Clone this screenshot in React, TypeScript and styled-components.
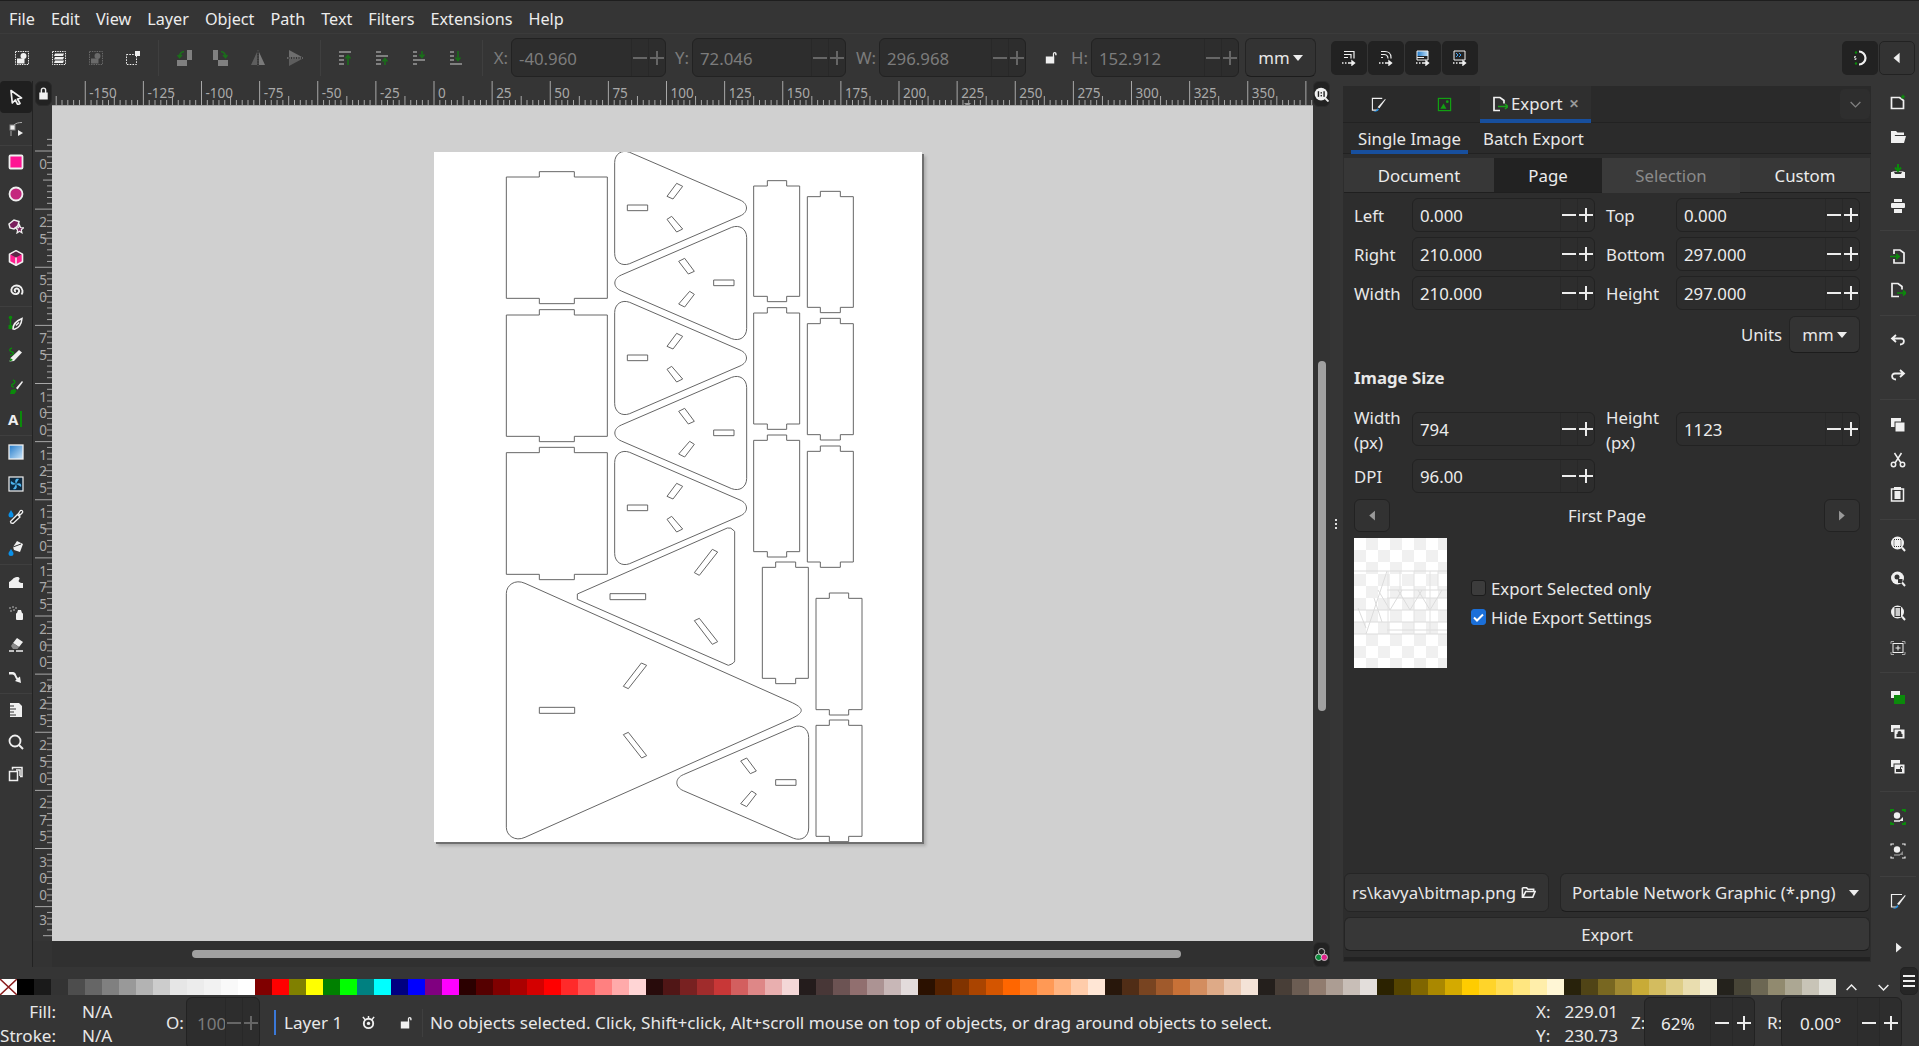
import React from 'react';
import styled, { createGlobalStyle } from 'styled-components';

const GlobalStyle = createGlobalStyle`
  html, body { margin: 0; padding: 0; background: #353535; }
  body { font-family: "Noto Sans", "Open Sans", sans-serif; font-size: 16.8px; color: #e8e8e8; }
  * { box-sizing: border-box; }
`;

// palette, same order as inkscape's default one
const SWATCHES = [
  '#000000', '#1a1a1a', '#333333', '#4d4d4d', '#666666', '#808080', '#999999', '#b3b3b3', '#cccccc', '#e6e6e6', '#ececec', '#f2f2f2', '#f9f9f9', '#ffffff',
  '#800000', '#ff0000', '#808000', '#ffff00', '#008000', '#00ff00', '#008080', '#00ffff', '#000080', '#0000ff', '#800080', '#ff00ff',
  '#2b0000', '#550000', '#800000', '#aa0000', '#d40000', '#ff0000', '#ff2a2a', '#ff5555', '#ff8080', '#ffaaaa', '#ffd5d5',
  '#280b0b', '#501616', '#782121', '#a02c2c', '#c83737', '#d35f5f', '#de8787', '#e9afaf', '#f4d7d7',
  '#241c1c', '#483737', '#6c5353', '#916f6f', '#ac9393', '#c8b7b7', '#e3dbdb',
  '#2b1100', '#552200', '#803300', '#aa4400', '#d45500', '#ff6600', '#ff7f2a', '#ff9955', '#ffb380', '#ffccaa', '#ffe6d5',
  '#28170b', '#502d16', '#784421', '#a05a2c', '#c87137', '#d38d5f', '#deaa87', '#e9c6af', '#f4e3d7',
  '#241f1c', '#483e37', '#6c5d53', '#917c6f', '#ac9d93', '#c8beb7', '#e3dedb',
  '#2b2200', '#554400', '#806600', '#aa8800', '#d4aa00', '#ffcc00', '#ffd42a', '#ffdd55', '#ffe680', '#ffeeaa', '#fff6d5',
  '#28220b', '#504416', '#786721', '#a08932', '#c8ab37', '#d3bc5f', '#decd87', '#e9ddaf', '#f4eed7',
  '#24221c', '#484537', '#6c6753', '#918a6f', '#aca793', '#c8c4b7', '#e3e2db',
];

const W = '#f0f0f0';
const G = '#0b8a0b';

const ICONS: Record<string, React.ReactNode> = {
  selAll: <><rect x="1.5" y="1.5" width="13" height="13" fill="none" stroke={W} strokeDasharray="1.4 1" /><circle cx="9.5" cy="6" r="3" fill={W} /><rect x="3" y="8.5" width="7.5" height="5" fill={W} /></>,
  selLayers: <><rect x="1.5" y="1.5" width="13" height="13" fill="none" stroke={W} strokeDasharray="1.4 1" /><path d="M4 3.5h9l-1 2.5H3zM4 7h9l-1 2.5H3zM4 10.5h9l-1 2.5H3z" fill={W} /></>,
  deselect: <><rect x="1.5" y="1.5" width="13" height="13" fill="none" stroke="#6a6a6a" strokeDasharray="1.4 1" /><circle cx="9.5" cy="6" r="3" fill="#6a6a6a" /><rect x="3" y="8.5" width="7.5" height="5" fill="#6a6a6a" /></>,
  selSame: <><rect x="1.5" y="4.5" width="10" height="10" fill="none" stroke={W} strokeDasharray="1.6 1.2" /><rect x="10" y="1" width="5" height="5" fill={W} /></>,
  rotCcw: <><rect x="1" y="10" width="10" height="6" fill="#808080" /><rect x="11" y="0" width="5" height="10" fill="#808080" /><path d="M8 1.5C5 2 3.5 4 3.5 7M1.5 5l2 2.5L6 5" fill="none" stroke="#1a6f1a" strokeWidth="1.6" /></>,
  rotCw: <><rect x="5" y="10" width="10" height="6" fill="#808080" /><rect x="0" y="0" width="5" height="10" fill="#808080" /><path d="M8 1.5c3 .5 4.5 2.5 4.5 5.5M10 5l2.5 2.5L14.5 5" fill="none" stroke="#1a6f1a" strokeWidth="1.6" /></>,
  flipH: <><path d="M7 2v13H1z" fill="#5e5e5e" /><path d="M9 2v13h6z" fill="#7a7a7a" /><path d="M8 0v16" stroke="#555" strokeDasharray="1.5 1" /></>,
  flipV: <><path d="M2 0l13 7H2z" fill="#6e6e6e" /><path d="M2 9h13L2 16z" fill="#5e5e5e" /><path d="M0 8h16" stroke={W} strokeOpacity=".5" strokeDasharray="1.5 1" /></>,
  raiseTop: <><path d="M1 1h12v2H1zM1 5h5v2H1zM1 9h5v2H1zM1 13h5v2H1z" fill="#808080" /><path d="M10 15V6M7.5 8.5L10 5.5l2.5 3" fill="none" stroke="#1a6f1a" strokeWidth="1.6" /></>,
  raise: <><path d="M1 1h5v2H1zM1 5h12v2H1zM1 9h5v2H1zM1 13h5v2H1z" fill="#808080" /><path d="M10 15V9M7.5 11.5L10 8.5l2.5 3" fill="none" stroke="#1a6f1a" strokeWidth="1.6" /></>,
  lower: <><path d="M1 1h4v2H1zM1 5h4v2H1zM1 9h12v2H1zM1 13h4v2H1z" fill="#808080" /><path d="M10 1v6M7.5 4.5L10 7.5l2.5-3" fill="none" stroke="#1a6f1a" strokeWidth="1.6" /></>,
  lowerBot: <><path d="M1 1h4v2H1zM1 5h4v2H1zM1 9h4v2H1zM1 13h12v2H1z" fill="#808080" /><path d="M9 1v9M6.5 7.5L9 10.5l2.5-3" fill="none" stroke="#1a6f1a" strokeWidth="1.6" /></>,
  scale1: <><path d="M3 1.5h10v7M3 4.5h7v4M3 7.5h4" fill="none" stroke={W} strokeWidth="1.2" /><path d="M1 13h1.5M4 13h1.5M7 13h6M11 11l2.5 2-2.5 2z" stroke={W} fill={W} strokeWidth="1.4" /></>,
  scale2: <><path d="M3 1.5h4c3 0 6 2 6 6v1M3 4.5h3c2 0 4 1.5 4 4M3 7.5h2" fill="none" stroke={W} strokeWidth="1.2" /><path d="M1 13h1.5M4 13h1.5M7 13h6M11 11l2.5 2-2.5 2z" stroke={W} fill={W} strokeWidth="1.4" /></>,
  scale3: <><defs><linearGradient id="scaleFill" x1="0" y1="0" x2="1" y2="0"><stop offset="0" stopColor="#1f78c8" /><stop offset="1" stopColor="#bfe0f8" /></linearGradient></defs><rect x="2" y="1" width="11" height="5" fill="url(#scaleFill)" /><path d="M2 1h11v9H2zM2 7.5h7" fill="none" stroke={W} /><path d="M1 13h1.5M4 13h1.5M7 13h6M11 11l2.5 2-2.5 2z" stroke={W} fill={W} strokeWidth="1.4" /></>,
  scale4: <><path d="M2 1h11v9H2z" fill="none" stroke={W} /><path d="M4 3l2 2-2 2M7 3l2 2-2 2" stroke="#3fa0f0" fill="none" /><path d="M1 13h1.5M4 13h1.5M7 13h6M11 11l2.5 2-2.5 2z" stroke={W} fill={W} strokeWidth="1.4" /></>,
  snap: <><path d="M7 1.5a6.5 6.5 0 1 1 0 13" fill="none" stroke={W} strokeWidth="2.2" /><circle cx="4" cy="2.5" r="1.2" fill={G} /><circle cx="4" cy="13.5" r="1.2" fill={G} /><path d="M4 6.5H2.500v1.500H4v1.500H2.500" fill="none" stroke={W} strokeWidth=".8" /></>,
  arrowL: <path d="M11 2v12L4 8z" fill={W} />,
  arrowR: <path d="M5 2v12l7-6z" fill={W} />,
  lockClosed: <path d="M5 7V4.5a3 3 0 0 1 6 0V7h1.500v7.500h-9V7zM6.500 7h3V4.5a1.500 1.500 0 0 0-3 0z" fill={W} fillRule="evenodd" />,
  lockOpen: <path d="M3 7h7.500V4a2 2 0 0 1 4 0v1.500h-1.500V4a.6.6 0 0 0-1.200 0V7H12v7.500H3z" fill={W} />,
  select: <path d="M3 1.5l10.500 7.500-4 1 2.500 4.500-2.200 1.200L7.300 11l-3 3z" fill="#1c1c1c" stroke={W} strokeWidth="1.7" strokeLinejoin="round" />,
  node: <><rect x="2" y="4" width="5" height="5" fill={W} stroke="#888" /><path d="M6 4C8 2 11 1.5 14 1.5M3 10v5" stroke="#aaa" fill="none" /><path d="M10 9l5 3-5 3z" fill={W} /></>,
  rect: <rect x="1.5" y="1.5" width="13" height="13" rx="1" fill="#ff1493" stroke={W} strokeWidth="1.8" />,
  circle: <circle cx="8" cy="8" r="6.500" fill="#c4277e" stroke={W} strokeWidth="1.8" />,
  star: <><path d="M1 6l5-4 5 1.500-1 4-4 3.500L2 10z" fill="#7a1f5c" stroke={W} strokeWidth="1.5" /><path d="M11.500 7l1 2.500 3 .3-2.200 2 .6 3-2.400-1.500L9 15l.6-3-2.100-2 3-.3z" fill="#7a1f5c" stroke={W} strokeWidth="1.2" /></>,
  box3d: <><path d="M8 .8l6.500 3.500v7.400L8 15.200 1.500 11.700V4.300z" fill="#ff1f8f" stroke={W} strokeWidth="1.6" strokeLinejoin="round" /><path d="M8 1.5L13.500 4.500 8 7.500 2.500 4.500z" fill="#5a2a48" /><path d="M8 7.500v7" stroke={W} strokeWidth="1.6" /></>,
  spiral: <path d="M8 9.500c-1.500 0-2-1.800-.5-2.700 2-1 4 .6 3.600 2.700-.5 2.500-4 3.500-6.200 1.800C2.500 9.500 2.800 5.500 6 4c3.500-1.500 8 .5 8.500 4.500.2 1.500-.2 3-1 4" fill="none" stroke={W} strokeWidth="1.9" />,
  pen: <><circle cx="2.5" cy="2.5" r="1.8" fill={G} /><path d="M2.500 3v8" stroke={G} strokeWidth="1.5" /><rect x="0.5" y="10" width="4" height="4" fill={G} /><path d="M5 14c0-4 3-8 9-10.500-.5 5-3 9.500-7.500 10.800zM8 10.500l3-3" fill="none" stroke={W} strokeWidth="1.5" /></>,
  pencil: <><path d="M4 1c-3 1-3 3 0 4 3 1 1 3-2 3" fill="none" stroke={G} strokeWidth="1.5" /><path d="M1.500 14.500l1-3.500L11 3l3 2.500-8 8.500z" fill={W} /><path d="M1.500 14.500l1-3.500 2.500 2z" fill={G} /></>,
  callig: <><path d="M5 1c3 1 2 3 0 4-2 1-2 3 1 3" fill="none" stroke={G} strokeWidth="1.5" /><path d="M8 9l6-7 1 1-5.500 7.500z" fill={W} /><path d="M2 15l1-4 4-1 1.500 2-2 3z" fill={G} /></>,
  gradient: <><defs><linearGradient id="gradTool" x1="0" y1="0" x2="1" y2="1"><stop offset="0" stopColor="#1f78c8" /><stop offset="1" stopColor="#cfe8fb" /></linearGradient></defs><rect x="1" y="1" width="14" height="14" fill="url(#gradTool)" stroke={W} strokeWidth="1.3" /></>,
  mesh: <><rect x="1" y="1" width="14" height="14" fill="#0d2a40" stroke={W} strokeWidth="1.2" /><path d="M8 8C6 4 8 2 11 3c-1 1-2 3-3 5zM8 8c4-2 6 0 5 3-1-1-3-2-5-3zM8 8c2 4 0 6-3 5 1-1 2-3 3-5zM8 8C4 10 2 8 3 5c1 1 3 2 5 3z" fill="#4db4ee" /></>,
  dropper: <><path d="M3 2C2 4 .5 5.500 .5 7a2.500 2.500 0 0 0 5 0C5.500 5.500 4 4 3 2z" fill="#0a90e8" /><path d="M3 15l-.5-1.500 7-7L12 9l-7 6.500zM10.500 5.500l2-3a1.500 1.500 0 0 1 2 2l-2.500 2.500z" fill="#222" stroke={W} strokeWidth="1.3" /></>,
  bucket: <><path d="M3 9c-1 2-2.500 3-2.500 4.500a2.500 2.500 0 0 0 5 0C5.500 12 4 11 3 9z" fill="#0a90e8" /><path d="M9 1l6 3-3 8-6-2-1-3z" fill={W} /><path d="M5 7l8-3" stroke="#333" /></>,
  tweak: <path d="M1 15V9c3-1 4-5 8-5 3 0 3 2 2 3-1 1 0 3 4 3v5z" fill={W} />,
  spray: <><rect x="8" y="8" width="7" height="7" rx="1" fill={W} /><path d="M9 8l1-3h3l1 3z" fill={W} /><g fill="#8c8c8c"><circle cx="2" cy="3" r="1" /><circle cx="5" cy="2" r="1" /><circle cx="3" cy="6" r="1" /><circle cx="6" cy="5" r="1" /><circle cx="8" cy="3" r="1" /></g></>,
  eraser: <><path d="M9 1l6 4-4 5-6-4z" fill={W} /><path d="M5 6l6 4-1.500 2H5L3 9z" fill="#8a8a8a" /><path d="M1 14h5M8 14h7" stroke={W} strokeWidth="1.5" /></>,
  connector: <path d="M1 3h4c3 0 3 4 5 6l2-1.500 1 6.500-6-2 1.500-1.500C7 8.500 6.500 5.500 4.500 5.500H1z" fill={W} />,
  measure: <><path d="M2 1h9l3 3v11H2z" fill={W} /><path d="M2 4h4M2 7h6M2 10h4M2 13h6" stroke="#333" /></>,
  zoom: <><circle cx="7" cy="7" r="5.500" fill="none" stroke={W} strokeWidth="1.8" /><path d="M11 11l4 4" stroke={W} strokeWidth="2" /></>,
  pages: <><path d="M1.500 5.500h8v9h-8z" fill="none" stroke={W} strokeWidth="1.5" /><path d="M4.500 3.500v-2h9.500v9h-2M8 4h4v6" fill="none" stroke={W} strokeWidth="1.5" /></>,
  newDoc: <><path d="M1.500 3.500h8l4 3v8h-12z" fill="#2d2d2d" stroke={W} strokeWidth="1.7" /><path d="M13 0l.8 1.700 1.700.2-1.300 1.200.3 1.800-1.500-.9-1.500.9.300-1.800L10.500 1.900l1.700-.2z" fill={G} /></>,
  open: <path d="M1 2h5l1.500 1.500H14V6H5L3 14H1zM4 7h12l-2 7H2z" fill={W} />,
  save: <><path d="M1 9h3l1 2h6l1-2h3v6H1z" fill={W} /><path d="M3 8h10l1 1H2z" fill={W} opacity=".6" /><path d="M8 1v6M5 4.500L8 8l3-3.500" fill="none" stroke={G} strokeWidth="2" /></>,
  print: <><rect x="4" y="1" width="8" height="3" fill={W} /><rect x="1" y="5" width="14" height="5" rx="1" fill={W} /><rect x="4" y="11" width="8" height="4" fill={W} /></>,
  importDoc: <><path d="M4 6V2h6l4 3v10H4v-4" fill="none" stroke={W} strokeWidth="1.7" /><path d="M0 8.500h8M6 6l3 2.500L6 11" fill="none" stroke={G} strokeWidth="1.7" /></>,
  exportDoc: <><path d="M9 14.500H2v-13h6l4 3v3" fill="none" stroke={W} strokeWidth="1.7" /><path d="M7 11h8.500M13 8.500l3 2.500-3 2.500" fill="none" stroke={G} strokeWidth="1.7" /></>,
  undo: <path d="M6 3L2 6.500l4 3.500M2.500 6.500H11c4 0 4 6-1 6" fill="none" stroke={W} strokeWidth="1.8" />,
  redo: <path d="M10 3l4 3.500-4 3.500M13.500 6.500H5c-4 0-4 6 1 6" fill="none" stroke={W} strokeWidth="1.8" />,
  copy: <><rect x="1" y="1" width="10" height="9" fill={W} /><rect x="5" y="5" width="10" height="10" fill={W} stroke="#333" /></>,
  cut: <><circle cx="3.5" cy="12.5" r="2.2" fill="none" stroke={W} strokeWidth="1.5" /><circle cx="12.5" cy="12.5" r="2.2" fill="none" stroke={W} strokeWidth="1.5" /><path d="M5 11L11.500 1M11 11L4.500 1" stroke={W} strokeWidth="1.5" /></>,
  paste: <><rect x="1.5" y="3" width="12" height="12" fill="none" stroke={W} strokeWidth="1.5" /><rect x="4" y="1" width="7" height="3" fill={W} /><rect x="4.5" y="5" width="6" height="8" fill={W} /></>,
  zoomSel: <><circle cx="7.5" cy="7" r="6.500" fill={W} /><rect x="4" y="3.5" width="7" height="7" fill="none" stroke="#333" strokeDasharray="1 1" /><path d="M12 11.500l3 3.500" stroke={W} strokeWidth="2" /></>,
  zoomDraw: <><circle cx="7.5" cy="7" r="6.500" fill={W} /><circle cx="7" cy="6" r="2.500" fill="#333" /><rect x="8" y="8" width="4.5" height="4" fill="#333" /><path d="M12 11.500l3 3.500" stroke={W} strokeWidth="2" /></>,
  zoomPage: <><circle cx="7.5" cy="7" r="6.500" fill={W} /><rect x="5" y="2.5" width="5.5" height="9" fill="#ccc" stroke="#333" /><path d="M12 11.500l3 3.500" stroke={W} strokeWidth="2" /></>,
  zoomCenter: <><path d="M1 4V1.500h3M12 1.500h3V4M1 12v2.500h3M12 14.500h3V12" fill="none" stroke="#aaa" /><rect x="3" y="3.5" width="10" height="9" fill="none" stroke={W} /><path d="M5.500 8h5M8 5.500v5" stroke={W} /></>,
  dupGreen: <><rect x="1" y="1" width="9" height="7" fill={W} /><rect x="4" y="5" width="11" height="9" fill={G} /></>,
  cloneLock: <><rect x="1" y="1" width="9" height="7" fill={W} /><rect x="4" y="5" width="11" height="10" fill={W} stroke="#333" /><path d="M7.500 10V9a2 2 0 0 1 4 0v1h1v3h-6v-3z" fill="#333" /></>,
  cloneOpen: <><rect x="1" y="1" width="9" height="7" fill={W} /><rect x="4" y="5" width="11" height="10" fill={W} stroke="#333" /><path d="M6 10h4V8.500a1.500 1.500 0 0 1 3 0h-1a.5.500 0 0 0-1 0V10h1v3H6z" fill="#333" /></>,
  groupGreen: <><path d="M1 3V1h3M12 1h3v2M1 13v2h3M12 15h3v-2" fill="none" stroke={G} strokeWidth="1.8" /><circle cx="7" cy="6.5" r="3.2" fill={W} /><path d="M9 12l4-4v4z" fill={W} /><path d="M4 12h6" stroke={W} strokeWidth="1.5" /></>,
  groupGray: <><path d="M1 2.500V1h3M12 1h3v1.500M1 13.500V15h3M12 15h3v-1.500" fill="none" stroke={W} strokeWidth="1.2" /><circle cx="7" cy="6.5" r="3.2" fill={W} /><path d="M9 12l4-4v4z" fill="#8a8a8a" /><path d="M4 12h6" stroke="#8a8a8a" strokeWidth="1.5" /></>,
  brush: <><path d="M12 1.500H1.500V14H7" fill="none" stroke={W} strokeWidth="1.2" /><path d="M7 11L15 2l.7.7L9 12z" fill={W} /><path d="M2 15.500c2.500 0 4.500-1 5-3.500l1.500 1c-.5 2-3 3-6.500 2.500z" fill="#1e90e8" /></>,
  tabExport: <><path d="M8 14.500H2v-13h6l4 3v3" fill="none" stroke={W} strokeWidth="1.7" /><path d="M6 10.500h9M13 8l3 2.500-3 2.500" fill="none" stroke="#1aa01a" strokeWidth="1.5" /></>,
  tabImage: <><rect x="1.5" y="1.5" width="13" height="13" fill="none" stroke="#12a012" strokeWidth="1.3" /><path d="M3.500 12.500L7 7l3 5.500z" fill="#12a012" /><circle cx="11" cy="5" r="1.5" fill="#12a012" /></>,
  folder: <path d="M1.500 3H6l1.500 1.500h6V7M1.500 3v10h11L15 7H5l-3 6" fill="none" stroke={W} strokeWidth="1.7" />,
  eye: <><circle cx="8" cy="9" r="5" fill="none" stroke={W} strokeWidth="2" /><circle cx="8" cy="9" r="1.8" fill={W} /><path d="M2 2l2.500 3M14 2l-2.500 3M8 1v2.500" stroke={W} strokeWidth="1.6" /></>,
  chevDown: <path d="M2 5l6 6 6-6" fill="none" stroke="#808080" strokeWidth="1.6" />,
  chevUp: <path d="M2 11l6-6 6 6" fill="none" stroke={W} strokeWidth="1.8" />,
  chevDn: <path d="M2 5l6 6 6-6" fill="none" stroke={W} strokeWidth="1.8" />,
  zoomOne: <><circle cx="7.5" cy="7.5" r="6.800" fill={W} /><path d="M12 12l3.500 3.500" stroke={W} strokeWidth="2" /><rect x="4" y="4.500" width="1.500" height="6" fill="#222" /><rect x="10" y="4.500" width="1.500" height="6" fill="#222" /><rect x="7" y="5.500" width="1.500" height="1.500" fill="#222" /><rect x="7" y="8.500" width="1.500" height="1.500" fill="#222" /></>,
  colorMgmt: <><circle cx="8" cy="5" r="3.400" fill="none" stroke="#ccc" /><circle cx="5" cy="11" r="3.400" fill="#0a8a3a" stroke="#ccc" /><circle cx="11" cy="11" r="3.400" fill="#e0208a" stroke="#ccc" /></>,
};

const Svg = styled.svg<{ $off?: boolean }>`
  display: block;
  flex: none;
  opacity: ${(p) => (p.$off ? 0.55 : 1)};
`;

const Icon = ({ name, size = 16, off }: { name: string; size?: number; off?: boolean }) => (
  <Svg $off={off} width={size} height={size} viewBox="0 0 16 16">
    {ICONS[name]}
  </Svg>
);

// page layout
const AppShell = styled.div`
  width: 1919px;
  height: 1046px;
  overflow: hidden;
  display: flex;
  flex-direction: column;
  background: #353535;
`;

const MenuBar = styled.div`
  height: 34px;
  flex: none;
  display: flex;
  align-items: center;
  padding: 3px 0 0 9px;
  gap: 16px;
  border-top: 1px solid #1e1e1e;
  border-bottom: 1px solid #3b3b3b;
  color: #ececec;
  font-size: 16.2px;
`;

const ToolBar = styled.div`
  height: 47px;
  flex: none;
  display: flex;
  align-items: center;
  padding-right: 4px;
`;

const IconGroup = styled.div<{ $pad?: number }>`
  display: flex;
  margin-left: ${(p) => p.$pad ?? 0}px;
`;

const BarIcon = styled.div`
  width: 37px;
  height: 34px;
  display: flex;
  align-items: center;
  justify-content: center;
`;

const BarSep = styled.div<{ $l: number; $r: number }>`
  width: 1px;
  height: 36px;
  background: #3f3f3f;
  margin: 0 ${(p) => p.$r}px 0 ${(p) => p.$l}px;
`;

const BarLabel = styled.div<{ $w: number; $off?: boolean }>`
  width: ${(p) => p.$w}px;
  flex: none;
  text-align: right;
  padding-right: 3px;
  color: ${(p) => (p.$off ? '#7c7c7c' : '#d8d8d8')};
`;

const SpinBox = styled.div<{ $w?: number; $h?: number; $off?: boolean }>`
  width: ${(p) => (p.$w ? `${p.$w}px` : '100%')};
  height: ${(p) => p.$h ?? 34}px;
  flex: none;
  display: flex;
  align-items: stretch;
  background: #2d2d2d;
  border: 1px solid #222;
  border-radius: 6px;
  color: ${(p) => (p.$off ? '#7c7c7c' : '#ececec')};
`;

const SpinValue = styled.div<{ $pad?: number }>`
  flex: 1;
  min-width: 0;
  display: flex;
  align-items: center;
  padding: 1px 0 0 ${(p) => p.$pad ?? 7}px;
  white-space: nowrap;
`;

const SpinCell = styled.div<{ $plus?: boolean; $off?: boolean; $w: number }>`
  width: ${(p) => p.$w}px;
  flex: none;
  position: relative;
  border-left: 1px solid #282828;
  &::before {
    content: '';
    position: absolute;
    left: calc(50% - 7px);
    top: calc(50% - 1px);
    width: 14px;
    height: 2px;
    background: ${(p) => (p.$off ? '#666' : '#ececec')};
  }
  &::after {
    content: ${(p) => (p.$plus ? "''" : 'none')};
    position: absolute;
    left: calc(50% - 1px);
    top: calc(50% - 7px);
    width: 2px;
    height: 14px;
    background: ${(p) => (p.$off ? '#666' : '#ececec')};
  }
`;

const Spin = ({ value, w, h, off, pad, cell = 17 }: { value: string; w?: number; h?: number; off?: boolean; pad?: number; cell?: number }) => (
  <SpinBox $w={w} $h={h} $off={off}>
    <SpinValue $pad={pad}>{value}</SpinValue>
    <SpinCell $w={cell} $off={off} />
    <SpinCell $w={cell} $off={off} $plus />
  </SpinBox>
);

const LockSlot = styled.div`
  width: 39px;
  flex: none;
  display: flex;
  justify-content: center;
  padding-left: 10px;
`;

const Arrow = styled.span<{ $dim?: boolean }>`
  display: inline-block;
  width: 0;
  height: 0;
  border-left: 5px solid transparent;
  border-right: 5px solid transparent;
  border-top: 6px solid ${(p) => (p.$dim ? '#888' : '#eee')};
`;

const UnitSelect = styled.div<{ $w: number; $h: number; $ml?: number }>`
  width: ${(p) => p.$w}px;
  height: ${(p) => p.$h}px;
  margin-left: ${(p) => p.$ml ?? 0}px;
  flex: none;
  display: flex;
  align-items: center;
  justify-content: center;
  gap: 3px;
  background: #333;
  border: 1px solid #242424;
  border-bottom-color: #1c1c1c;
  border-radius: 6px;
`;

const DarkButtons = styled.div<{ $l?: number; $auto?: boolean }>`
  display: flex;
  gap: 1px;
  margin-left: ${(p) => (p.$auto ? 'auto' : `${p.$l ?? 0}px`)};
`;

const DarkButton = styled.div<{ $raised?: boolean }>`
  width: 36px;
  height: 34px;
  display: flex;
  align-items: center;
  justify-content: center;
  border-radius: 5px;
  background: ${(p) => (p.$raised ? '#333' : '#222')};
  border: ${(p) => (p.$raised ? '1px solid #222' : 'none')};
`;

const Main = styled.div`
  height: 886px;
  flex: none;
  display: flex;
`;

const ToolColumn = styled.div`
  width: 33px;
  flex: none;
  border-right: 1px solid #222;
`;

const ToolButton = styled.div<{ $active?: boolean }>`
  height: 32px;
  display: flex;
  align-items: center;
  justify-content: center;
  background: ${(p) => (p.$active ? '#1f1f1f' : 'transparent')};
  border-radius: ${(p) => (p.$active ? '4px' : '0')};
`;

const ToolSep = styled.div`
  height: 1px;
  background: #3f3f3f;
`;

const CanvasArea = styled.div`
  width: 1280px;
  flex: none;
  display: grid;
  grid-template-columns: 19px 1261px;
  grid-template-rows: 25px 835px 26px;
`;

const RulerCorner = styled.div`
  display: flex;
  align-items: center;
  justify-content: center;
  background: #222;
  border: 1px solid #2a2a2a;
  border-radius: 6px;
  margin-left: 2px;
`;

const RulerSvg = styled.svg`
  display: block;
  font-family: "Noto Sans", sans-serif;
`;

const Canvas = styled.div`
  position: relative;
  background: #d0d0d0;
  overflow: hidden;
`;

const Page = styled.svg`
  position: absolute;
  left: 382px;
  top: 46px;
  display: block;
  background: #fff;
  box-shadow: 2px 2px 0 #6f6f6f, 4px 4px 3px rgba(0, 0, 0, 0.18);
`;

const BelowRuler = styled.div`
  background: #333;
`;

const HScrollTrack = styled.div`
  background: #303030;
  padding: 9px 0 0 140px;
`;

const HThumb = styled.div`
  width: 989px;
  height: 8px;
  border-radius: 4px;
  background: #a0a0a0;
`;

const ScrollColumn = styled.div`
  width: 17px;
  flex: none;
  display: flex;
  flex-direction: column;
  background: #333;
`;

const CornerButton = styled.div<{ $h: number }>`
  height: ${(p) => p.$h}px;
  flex: none;
  display: flex;
  align-items: center;
  justify-content: center;
  background: #222;
  border: 1px solid #2c2c2c;
  border-radius: 6px;
`;

const VTrack = styled.div`
  flex: 1;
  padding: 254px 0 0 5px;
`;

const VThumb = styled.div`
  width: 8px;
  height: 350px;
  border-radius: 4px;
  background: #a0a0a0;
`;

const DockHandle = styled.div`
  width: 13px;
  flex: none;
  display: flex;
  flex-direction: column;
  align-items: center;
  justify-content: center;
  gap: 2px;
  padding-right: 1px;
`;

const HandleDot = styled.span`
  width: 2px;
  height: 2px;
  background: #ddd;
`;

const Panel = styled.div`
  width: 528px;
  flex: none;
  margin: 5px 0;
  display: flex;
  flex-direction: column;
  background: #2d2d2d;
`;

const DockTabs = styled.div`
  height: 37px;
  flex: none;
  display: flex;
  background: #2a2a2a;
  border-bottom: 1px solid #222;
`;

const DockTab = styled.div<{ $w: number }>`
  width: ${(p) => p.$w}px;
  flex: none;
  display: flex;
  align-items: center;
  justify-content: center;
`;

const ActiveTab = styled.div`
  width: 111px;
  margin-left: 4px;
  flex: none;
  display: flex;
  align-items: center;
  gap: 3px;
  padding: 2px 0 0 12px;
  background: #2f2f2f;
  border-bottom: 4px solid #174f9e;
  height: 37px;
`;

const TabClose = styled.span`
  margin-left: 3px;
  color: #999;
  font-size: 12px;
  font-weight: 700;
`;

const TabCollapse = styled.div`
  width: 30px;
  height: 30px;
  margin: 3px 1px 0 auto;
  display: flex;
  align-items: center;
  justify-content: center;
  background: #2e2e2e;
  border-radius: 5px;
`;

const SubTabs = styled.div`
  height: 31px;
  flex: none;
  display: flex;
  padding-left: 8px;
  background: #2b2b2b;
  border-bottom: 1px solid #222;
`;

const SubTab = styled.div<{ $active?: boolean }>`
  height: 31px;
  padding: 0 7px;
  margin-right: 8px;
  line-height: 31px;
  border-bottom: ${(p) => (p.$active ? '4px solid #174f9e' : 'none')};
  white-space: nowrap;
`;

const Segments = styled.div`
  margin: 4px 1px 0 1px;
  height: 35px;
  flex: none;
  display: grid;
  grid-template-columns: 150px 108px 138px 130px;
`;

const Segment = styled.div<{ $state?: 'on' | 'off' }>`
  display: flex;
  align-items: center;
  justify-content: center;
  padding-top: 1px;
  border-bottom: 1px solid ${(p) => (p.$state === 'off' ? '#3a3a3a' : '#1f1f1f')};
  background: ${(p) => (p.$state === 'on' ? '#222' : p.$state === 'off' ? '#3a3a3a' : '#373737')};
  color: ${(p) => (p.$state === 'off' ? '#8a8a8a' : '#ececec')};
`;

const FormGrid = styled.div<{ $gap: number; $top: number }>`
  margin: ${(p) => p.$top}px 0 0 11px;
  width: 506px;
  display: grid;
  grid-template-columns: 58px 183px 81px 184px;
  grid-auto-rows: 34px;
  row-gap: ${(p) => p.$gap}px;
`;

const FieldLabel = styled.div<{ $second?: boolean }>`
  display: flex;
  align-items: center;
  line-height: 25px;
  padding: 1px 0 0 ${(p) => (p.$second ? 11 : 0)}px;
  white-space: pre-line;
`;

const UnitsRow = styled.div`
  margin: 6px 11px 0 0;
  height: 37px;
  flex: none;
  display: flex;
  justify-content: flex-end;
  align-items: center;
  gap: 7px;
`;

const Heading = styled.div`
  margin: 14px 0 0 11px;
  height: 22px;
  flex: none;
  line-height: 22px;
  font-weight: 700;
`;

const NavRow = styled.div`
  margin: 6px 11px 0 11px;
  height: 33px;
  flex: none;
  display: flex;
  align-items: center;
  justify-content: space-between;
`;

const NavButton = styled.div`
  width: 36px;
  height: 33px;
  display: flex;
  align-items: center;
  justify-content: center;
  border: 1px solid #222;
  border-radius: 6px;
  background: #323232;
`;

const PreviewRow = styled.div`
  margin: 6px 0 0 11px;
  display: flex;
  gap: 24px;
  flex: none;
`;

const Preview = styled.svg`
  display: block;
  background-color: #fff;
  background-image: conic-gradient(#f0f0f0 25%, #fff 0 50%, #f0f0f0 0 75%, #fff 0);
  background-size: 24px 24px;
`;

const Checks = styled.div`
  padding-top: 42px;
  display: flex;
  flex-direction: column;
  gap: 13px;
`;

const CheckRow = styled.div`
  height: 16px;
  display: flex;
  align-items: center;
  gap: 5px;
  line-height: 18px;
`;

const CheckText = styled.span`
  padding-top: 2px;
  white-space: nowrap;
`;

const CheckBox = styled.span<{ $on?: boolean }>`
  width: 15px;
  height: 16px;
  flex: none;
  display: flex;
  align-items: center;
  justify-content: center;
  border-radius: 3px;
  border: 1px solid ${(p) => (p.$on ? '#1b6fd8' : '#1c1c1c')};
  background: ${(p) => (p.$on ? '#1b6fd8' : '#3c3c3c')};
`;

const PanelBottom = styled.div`
  margin: auto 1px 1px 1px;
  display: flex;
  flex-direction: column;
`;

const FileRow = styled.div`
  height: 39px;
  display: flex;
  gap: 11px;
`;

const FileInput = styled.div`
  width: 205px;
  flex: none;
  display: flex;
  align-items: center;
  gap: 5px;
  padding-left: 7px;
  background: #333;
  border: 1px solid #252525;
  border-radius: 6px;
  white-space: nowrap;
  overflow: hidden;
`;

const FormatSelect = styled.div`
  flex: 1;
  display: flex;
  align-items: center;
  justify-content: space-between;
  padding: 0 10px 0 11px;
  background: #333;
  border: 1px solid #252525;
  border-bottom-color: #1c1c1c;
  border-radius: 6px;
  white-space: nowrap;
`;

const ExportButton = styled.div`
  height: 34px;
  margin-top: 5px;
  display: flex;
  align-items: center;
  justify-content: center;
  background: #373737;
  border: 1px solid #252525;
  border-bottom-color: #1c1c1c;
  border-radius: 6px;
`;

const BottomStrip = styled.div`
  height: 4px;
  margin-top: 6px;
  background: #222;
`;

const CommandBar = styled.div`
  width: 48px;
  flex: none;
  padding: 4px 3px 0 9px;
`;

const CommandButton = styled.div<{ $top?: number }>`
  height: 34.5px;
  margin-top: ${(p) => p.$top ?? 0}px;
  display: flex;
  align-items: center;
  justify-content: center;
`;

const CommandSep = styled.div`
  height: 1px;
  background: #3f3f3f;
  margin: 7.3px 0;
`;

const PaletteRow = styled.div`
  height: 29px;
  flex: none;
  display: flex;
  align-items: flex-end;
  padding-bottom: 1px;
`;

const Swatch = styled.div<{ $color: string }>`
  width: 17px;
  height: 16px;
  flex: none;
  background: ${(p) => p.$color};
`;

const NoneSwatch = styled.svg`
  width: 17px;
  height: 16px;
  flex: none;
  display: block;
  background: #fff;
`;

const PaletteBtn = styled.div<{ $w: number }>`
  width: ${(p) => p.$w}px;
  height: 16px;
  flex: none;
  display: flex;
  align-items: center;
  justify-content: center;
`;

const MenuToggle = styled.div`
  width: 18px;
  height: 28px;
  margin-left: 1px;
  flex: none;
  display: flex;
  flex-direction: column;
  justify-content: center;
  gap: 3px;
  padding: 0 2px;
  background: #262626;
  border: 1px solid #222;
  border-radius: 5px;
`;

const ToggleLine = styled.span`
  height: 2px;
  background: #eee;
`;

const StatusBar = styled.div`
  height: 50px;
  flex: none;
  padding-top: 3px;
  display: flex;
  align-items: center;
  overflow: hidden;
  font-size: 17.1px;
`;

const FillGrid = styled.div`
  width: 166px;
  flex: none;
  display: grid;
  grid-template-columns: 56px 1fr;
  column-gap: 26px;
  line-height: 24px;
  padding-top: 2px;
`;

const FillKey = styled.div`
  text-align: right;
  white-space: nowrap;
`;

const StatusLabel = styled.div<{ $w: number; $pad?: number }>`
  width: ${(p) => p.$w}px;
  padding-left: ${(p) => p.$pad ?? 0}px;
  flex: none;
  white-space: nowrap;
`;

const LayerMark = styled.div`
  width: 2px;
  height: 25px;
  margin: 0 8px 0 14px;
  flex: none;
  background: #3a78d8;
`;

const LayerName = styled.div`
  width: 75px;
  flex: none;
  white-space: nowrap;
`;

const StatusIcon = styled.div<{ $w: number; $ml?: number }>`
  width: ${(p) => p.$w}px;
  margin-left: ${(p) => p.$ml ?? 0}px;
  flex: none;
  display: flex;
  justify-content: center;
`;

const StatusSep = styled.div`
  width: 1px;
  height: 28px;
  margin: 0 7px 0 3px;
  flex: none;
  background: #3f3f3f;
`;

const Message = styled.div`
  width: 1106px;
  flex: none;
  white-space: nowrap;
`;

const CoordGrid = styled.div`
  width: 95px;
  padding: 2px 13px 0 0;
  flex: none;
  display: grid;
  grid-template-columns: 26px 1fr;
  line-height: 24px;
`;

const CoordValue = styled.div`
  text-align: right;
`;

// drawing on the page, numbers are in thirds of a screen pixel
const tabBox = (x: number, y: number, w: number, h: number, tl: number, tr: number) =>
  `M${x} ${y}H${tl}V${y - 16}H${tr}V${y}H${x + w}V${y + h}H${tr}V${y + h + 16}H${tl}V${y + h}H${x}Z`;

const BOXES = [
  tabBox(79, 111, 303, 364, 178, 283),
  tabBox(79, 525, 303, 364, 178, 283),
  tabBox(79, 938, 303, 365, 178, 283),
  tabBox(821, 138, 138, 331, 862, 920),
  tabBox(821, 519, 138, 333, 862, 920),
  tabBox(821, 901, 138, 334, 862, 920),
  tabBox(982, 170, 138, 332, 1021, 1081),
  tabBox(982, 551, 138, 333, 1021, 1081),
  tabBox(982, 934, 138, 332, 1021, 1081),
  tabBox(847, 1282, 138, 333, 887, 947),
  tabBox(1008, 1375, 138, 334, 1048, 1106),
  tabBox(1008, 1756, 138, 333, 1048, 1106),
];

const RIGHT_TRI = 'M404 68C404 42 425 28 449 37L780 180C806 191 806 217 780 228L449 371C425 380 404 366 404 340Z';
const RIGHT_SLOTS = 'M442 195H503V212H442ZM590 130L608 139L579 177L561 169ZM575 229L561 238L590 276L608 267Z';

const LEFT_TRI = 'M800 293C800 267 779 253 755 262L424 405C398 416 398 442 424 453L755 596C779 605 800 591 800 565Z';
const LEFT_SLOTS = 'M701 420H762V437H701ZM614 355L596 364L625 402L643 394ZM629 454L643 463L614 501L596 492Z';

const Drawing = () => (
  <Page width={488} height={690} viewBox="-138 36 1464 2070">
    <g fill="none" stroke="#666" strokeWidth="3">
      {BOXES.map((d) => (
        <path key={d} d={d} />
      ))}
      {[0, 450, 900].map((dy) => (
        <g key={dy} transform={`translate(0 ${dy})`}>
          <path d={RIGHT_TRI} />
          <path d={RIGHT_SLOTS} />
        </g>
      ))}
      {[0, 450].map((dy) => (
        <g key={dy} transform={`translate(0 ${dy})`}>
          <path d={LEFT_TRI} />
          <path d={LEFT_SLOTS} />
        </g>
      ))}
      <g transform="translate(186 1499)">
        <path d={LEFT_TRI} />
        <path d={LEFT_SLOTS} />
      </g>
      <path d="M292 1362L742 1164Q752 1160 764 1174V1562Q764 1570 745 1576L292 1378Z" />
      <path d="M390 1361H497V1379H390ZM697 1228L713 1236L658 1306L643 1298ZM658 1435L643 1442L697 1513L713 1505Z" />
      <path d="M79 1360C79 1336 105 1316 135 1330L930 1685C975 1705 975 1717 930 1738L135 2092C105 2106 79 2086 79 2062Z" />
      <path d="M178 1702H284V1720H178ZM484 1569L500 1576L445 1646L430 1639ZM445 1777L430 1784L485 1854L500 1847Z" />
    </g>
  </Page>
);

const RULER_PX = 2.325;
const ORIGIN_X = 382; // mm 0 inside the horizontal ruler
const ORIGIN_Y = 45; // mm 0 inside the vertical ruler

const HRuler = () => {
  const marks: React.ReactNode[] = [];
  for (let i = -70; i <= 156; i++) {
    const x = ORIGIN_X + i * 2.5 * RULER_PX;
    if (x < 0 || x > 1261) continue;
    const major = i % 10 === 0;
    const mid = i % 5 === 0;
    marks.push(<line key={i} x1={x} x2={x} y1={major ? 0 : mid ? 15 : 19} y2={25} stroke="#a8a8a8" strokeWidth="1" />);
    if (major && x < 1230) {
      marks.push(<text key={`t${i}`} x={x + 4} y={17} fontSize="13.5" fill="#a9a9a9">{i * 2.5}</text>);
    }
  }
  return (
    <RulerSvg width={1261} height={25}>
      {marks}
      <rect x="0" y="24" width="1261" height="1" fill="#a8a8a8" />
      <path d="M912 22h7l-3.5 4z" fill="#9a9a9a" />
    </RulerSvg>
  );
};

const VRuler = () => {
  const marks: React.ReactNode[] = [];
  for (let i = -2; i <= 140; i++) {
    const y = ORIGIN_Y + i * 2.5 * RULER_PX;
    if (y < 0 || y > 835) continue;
    const major = i % 10 === 0;
    const mid = i % 5 === 0;
    marks.push(<line key={i} x1={major ? 2 : mid ? 10 : 14} x2={19} y1={y} y2={y} stroke="#a8a8a8" strokeWidth="1" />);
    if (major) {
      String(i * 2.5).split('').forEach((digit, n) => {
        const dy = y + 18 + n * 16.5;
        if (dy < 832) {
          marks.push(<text key={`t${i}-${n}`} x={10} y={dy} textAnchor="middle" fontSize="13.5" fill="#a9a9a9">{digit}</text>);
        }
      });
    }
  }
  return (
    <RulerSvg width={19} height={835}>
      {marks}
      <path d="M15 578l4 3.5-4 3.5z" fill="#9a9a9a" />
    </RulerSvg>
  );
};

const MENU = ['File', 'Edit', 'View', 'Layer', 'Object', 'Path', 'Text', 'Filters', 'Extensions', 'Help'];

const TOOL_GROUPS = [
  ['select', 'node'],
  ['rect', 'circle', 'star', 'box3d', 'spiral'],
  ['pen', 'pencil', 'callig', 'text'],
  ['gradient', 'mesh', 'dropper', 'bucket'],
  ['tweak', 'spray', 'eraser', 'connector'],
  ['measure', 'zoom', 'pages'],
];

const COMMAND_GROUPS = [
  ['newDoc', 'open', 'save', 'print'],
  ['importDoc', 'exportDoc'],
  ['undo', 'redo'],
  ['copy', 'cut', 'paste'],
  ['zoomSel', 'zoomDraw', 'zoomPage', 'zoomCenter'],
  ['dupGreen', 'cloneLock', 'cloneOpen'],
  ['groupGreen', 'groupGray'],
];

const ToolIcon = ({ name }: { name: string }) => {
  if (name === 'text') {
    return (
      <Svg width={18} height={18} viewBox="0 0 18 18">
        <text x="1" y="15" fontSize="15" fontWeight="700" fontFamily="Noto Sans, sans-serif" fill={W}>A</text>
        <rect x="13" y="1" width="2" height="16" fill={G} />
      </Svg>
    );
  }
  return <Icon name={name} size={16} />;
};

const App = () => {
  return (
    <AppShell>
      <GlobalStyle />
      <MenuBar>
        {MENU.map((item) => (
          <div key={item}>{item}</div>
        ))}
      </MenuBar>

      <ToolBar>
        <IconGroup $pad={3}>
          <BarIcon><Icon name="selAll" /></BarIcon>
          <BarIcon><Icon name="selLayers" /></BarIcon>
          <BarIcon><Icon name="deselect" /></BarIcon>
          <BarIcon><Icon name="selSame" /></BarIcon>
        </IconGroup>
        <BarSep $l={7} $r={6} />
        <IconGroup>
          <BarIcon><Icon name="rotCcw" /></BarIcon>
          <BarIcon><Icon name="rotCw" /></BarIcon>
          <BarIcon><Icon name="flipH" /></BarIcon>
          <BarIcon><Icon name="flipV" /></BarIcon>
        </IconGroup>
        <BarSep $l={7} $r={6} />
        <IconGroup>
          <BarIcon><Icon name="raiseTop" /></BarIcon>
          <BarIcon><Icon name="raise" /></BarIcon>
          <BarIcon><Icon name="lower" /></BarIcon>
          <BarIcon><Icon name="lowerBot" /></BarIcon>
        </IconGroup>
        <BarSep $l={7} $r={0} />
        <BarLabel $w={28} $off>X:</BarLabel>
        <Spin value="-40.960" w={155} h={39} off />
        <BarLabel $w={26} $off>Y:</BarLabel>
        <Spin value="72.046" w={154} h={39} off />
        <BarLabel $w={33} $off>W:</BarLabel>
        <Spin value="296.968" w={147} h={39} off />
        <LockSlot><Icon name="lockOpen" size={15} /></LockSlot>
        <BarLabel $w={26} $off>H:</BarLabel>
        <Spin value="152.912" w={148} h={39} off />
        <UnitSelect $w={71} $h={39} $ml={6}>
          mm <Arrow />
        </UnitSelect>
        <DarkButtons $l={15}>
          <DarkButton><Icon name="scale1" /></DarkButton>
          <DarkButton><Icon name="scale2" /></DarkButton>
          <DarkButton><Icon name="scale3" /></DarkButton>
          <DarkButton><Icon name="scale4" /></DarkButton>
        </DarkButtons>
        <DarkButtons $auto>
          <DarkButton><Icon name="snap" /></DarkButton>
          <DarkButton $raised><Icon name="arrowL" size={14} /></DarkButton>
        </DarkButtons>
      </ToolBar>

      <Main>
        <ToolColumn>
          {TOOL_GROUPS.map((group, i) => (
            <React.Fragment key={group[0]}>
              {i > 0 && <ToolSep />}
              {group.map((tool) => (
                <ToolButton key={tool} $active={tool === 'select'}>
                  <ToolIcon name={tool} />
                </ToolButton>
              ))}
            </React.Fragment>
          ))}
        </ToolColumn>

        <CanvasArea>
          <RulerCorner><Icon name="lockClosed" size={15} /></RulerCorner>
          <HRuler />
          <VRuler />
          <Canvas><Drawing /></Canvas>
          <BelowRuler />
          <HScrollTrack><HThumb /></HScrollTrack>
        </CanvasArea>

        <ScrollColumn>
          <CornerButton $h={26}><Icon name="zoomOne" size={15} /></CornerButton>
          <VTrack><VThumb /></VTrack>
          <CornerButton $h={25}><Icon name="colorMgmt" size={15} /></CornerButton>
        </ScrollColumn>

        <DockHandle>
          <HandleDot />
          <HandleDot />
          <HandleDot />
        </DockHandle>

        <Panel>
          <DockTabs>
            <DockTab $w={70}><Icon name="brush" size={15} /></DockTab>
            <DockTab $w={63}><Icon name="tabImage" size={15} /></DockTab>
            <ActiveTab>
              <Icon name="tabExport" size={16} />
              Export
              <TabClose>✕</TabClose>
            </ActiveTab>
            <TabCollapse><Icon name="chevDown" size={13} /></TabCollapse>
          </DockTabs>

          <SubTabs>
            <SubTab $active>Single Image</SubTab>
            <SubTab>Batch Export</SubTab>
          </SubTabs>

          <Segments>
            <Segment>Document</Segment>
            <Segment $state="on">Page</Segment>
            <Segment $state="off">Selection</Segment>
            <Segment>Custom</Segment>
          </Segments>

          <FormGrid $gap={5} $top={5}>
            <FieldLabel>Left</FieldLabel>
            <Spin value="0.000" />
            <FieldLabel $second>Top</FieldLabel>
            <Spin value="0.000" />
            <FieldLabel>Right</FieldLabel>
            <Spin value="210.000" />
            <FieldLabel $second>Bottom</FieldLabel>
            <Spin value="297.000" />
            <FieldLabel>Width</FieldLabel>
            <Spin value="210.000" />
            <FieldLabel $second>Height</FieldLabel>
            <Spin value="297.000" />
          </FormGrid>

          <UnitsRow>
            Units
            <UnitSelect $w={71} $h={37}>mm <Arrow /></UnitSelect>
          </UnitsRow>

          <Heading>Image Size</Heading>

          <FormGrid $gap={13} $top={23}>
            <FieldLabel>{'Width\n(px)'}</FieldLabel>
            <Spin value="794" />
            <FieldLabel $second>{'Height\n(px)'}</FieldLabel>
            <Spin value="1123" />
            <FieldLabel>DPI</FieldLabel>
            <Spin value="96.00" />
          </FormGrid>

          <NavRow>
            <NavButton><Icon name="arrowL" size={13} off /></NavButton>
            <div>First Page</div>
            <NavButton><Icon name="arrowR" size={13} off /></NavButton>
          </NavRow>

          <PreviewRow>
            <Preview width={93} height={130} viewBox="0 0 93 130">
              <g fill="none" stroke="#dcdcdc" strokeWidth="1">
                <path d="M0 33H93M0 96H93M33 52H93M0 72H93M33 84H93M12 96L33 33M48 52L36 72L24 52M68 52L56 72L44 52M88 52L76 72L64 52M33 60H93M0 84H33M33 92H93M4 70L12 90M20 60L28 84" />
                <path d="M34 33V96M60 33V96M76 33V96M46 33V52M84 33V52" stroke="#e2e2e2" />
              </g>
            </Preview>
            <Checks>
              <CheckRow>
                <CheckBox />
                <CheckText>Export Selected only</CheckText>
              </CheckRow>
              <CheckRow>
                <CheckBox $on>
                  <svg width="11" height="9" viewBox="0 0 11 9">
                    <path d="M1 4.500l3 3 6-6" fill="none" stroke="#fff" strokeWidth="2" />
                  </svg>
                </CheckBox>
                <CheckText>Hide Export Settings</CheckText>
              </CheckRow>
            </Checks>
          </PreviewRow>

          <PanelBottom>
            <FileRow>
              <FileInput>
                rs\kavya\bitmap.png
                <Icon name="folder" size={15} />
              </FileInput>
              <FormatSelect>
                Portable Network Graphic (*.png)
                <Arrow />
              </FormatSelect>
            </FileRow>
            <ExportButton>Export</ExportButton>
            <BottomStrip />
          </PanelBottom>
        </Panel>

        <CommandBar>
          {COMMAND_GROUPS.map((group, i) => (
            <React.Fragment key={group[0]}>
              {i > 0 && <CommandSep />}
              {group.map((cmd) => (
                <CommandButton key={cmd}><Icon name={cmd} /></CommandButton>
              ))}
            </React.Fragment>
          ))}
          <CommandSep />
          <CommandButton><Icon name="brush" /></CommandButton>
          <CommandButton $top={12}><Icon name="arrowR" size={13} /></CommandButton>
        </CommandBar>
      </Main>

      <PaletteRow>
        <NoneSwatch viewBox="0 0 17 16">
          <path d="M0 0L17 16M17 0L0 16" stroke="#8a1c1c" strokeWidth="1.5" />
        </NoneSwatch>
        {SWATCHES.map((color, i) => (
          <Swatch key={`${color}${i}`} $color={color} />
        ))}
        <PaletteBtn $w={31}><Icon name="chevUp" size={13} /></PaletteBtn>
        <PaletteBtn $w={32}><Icon name="chevDn" size={13} /></PaletteBtn>
        <MenuToggle>
          <ToggleLine />
          <ToggleLine />
          <ToggleLine />
        </MenuToggle>
      </PaletteRow>

      <StatusBar>
        <FillGrid>
          <FillKey>Fill:</FillKey>
          <div>N/A</div>
          <FillKey>Stroke:</FillKey>
          <div>N/A</div>
        </FillGrid>
        <StatusLabel $w={20}>O:</StatusLabel>
        <Spin value="100" w={74} h={52} off pad={10} />
        <LayerMark />
        <LayerName>Layer 1</LayerName>
        <StatusIcon $w={18}><Icon name="eye" size={15} /></StatusIcon>
        <StatusIcon $w={28} $ml={14}><Icon name="lockOpen" size={15} /></StatusIcon>
        <StatusSep />
        <Message>No objects selected. Click, Shift+click, Alt+scroll mouse on top of objects, or drag around objects to select.</Message>
        <CoordGrid>
          <div>X:</div>
          <CoordValue>229.01</CoordValue>
          <div>Y:</div>
          <CoordValue>230.73</CoordValue>
        </CoordGrid>
        <StatusLabel $w={13}>Z:</StatusLabel>
        <Spin value="62%" w={111} h={52} pad={16} cell={22} />
        <StatusLabel $w={26} $pad={12}>R:</StatusLabel>
        <Spin value="0.00°" w={121} h={52} pad={18} cell={22} />
      </StatusBar>
    </AppShell>
  );
};

export default App;
